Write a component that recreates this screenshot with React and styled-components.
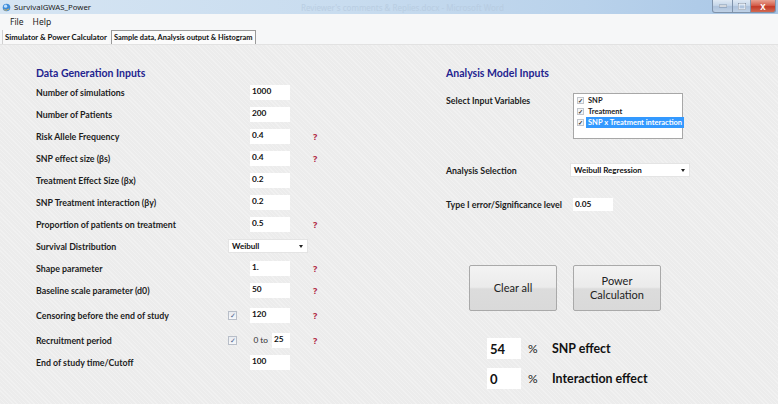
import React from "react";
import styled, { createGlobalStyle, css } from "styled-components";

const Global = createGlobalStyle`
  html, body { margin: 0; padding: 0; }
  body { width: 778px; height: 404px; overflow: hidden; background: #ececec; }
  * { box-sizing: border-box; }
`;

const FONT = `"Lato", "Open Sans", sans-serif`;
const UI = `"Noto Sans", "Open Sans", sans-serif`;

const Window = styled.div`
  width: 778px;
  height: 404px;
  display: flex;
  flex-direction: column;
  font-family: ${FONT};
  color: #1d1d1d;
`;

const TitleBar = styled.div`
  height: 14px;
  flex: none;
  display: flex;
  align-items: center;
  background: linear-gradient(to right, #d6e5f3 0%, #c8dcef 45%, #b9d2eb 75%, #a8c6e6 100%);
`;

const AppIcon = styled.svg`
  width: 9px;
  height: 9px;
  margin: 0 3px 0 2px;
`;

const TitleText = styled.span`
  font-family: ${UI};
  font-size: 7.8px;
  color: #1a1a1a;
`;

const FaintTitle = styled.span`
  font-family: ${UI};
  font-size: 8px;
  color: #b7cbe0;
  margin-left: 210px;
  opacity: 0.8;
`;

const Controls = styled.div`
  margin-left: auto;
  margin-right: 2px;
  display: flex;
  align-self: flex-start;
  height: 13px;
`;

const Ctrl = styled.div`
  width: ${(p) => p.w}px;
  height: 13px;
  display: flex;
  align-items: center;
  justify-content: center;
  border: 1px solid #7f93ab;
  border-top: none;
  border-left: ${(p) => (p.first ? "1px solid #7f93ab" : "none")};
  border-radius: ${(p) => (p.first ? "0 0 0 3px" : p.last ? "0 0 3px 0" : "0")};
  background: ${(p) =>
    p.close
      ? "linear-gradient(#e7a393 0%, #d45f4c 45%, #c23a27 55%, #d26a53 100%)"
      : "linear-gradient(#dfe9f4 0%, #c5d6e9 45%, #aec3dc 55%, #bfd1e6 100%)"};
  color: #fff;
  font-family: ${UI};
  font-size: 8px;
  font-weight: 700;
`;

const MenuBar = styled.div`
  height: 15px;
  flex: none;
  display: flex;
  align-items: center;
  gap: 9px;
  padding-left: 10px;
  background: #f6f7f8;
`;

const MenuItem = styled.span`
  font-family: ${UI};
  font-size: 8.5px;
  color: #222;
`;

const TabStrip = styled.div`
  height: 15px;
  flex: none;
  display: flex;
  align-items: flex-end;
  padding-left: 2px;
  gap: 2px;
  background: #f6f7f8;
`;

const Tab = styled.div`
  height: 14px;
  display: flex;
  align-items: center;
  padding: 0 2px;
  font-family: ${FONT};
  font-weight: 700;
  font-size: ${(p) => p.size}px;
  color: #111;
  white-space: nowrap;
  ${(p) =>
    p.active
      ? css`
          background: #f9f9f9;
          border-left: 1px solid #d0d0d0;
        `
      : css`
          background: #fbfbfb;
          border: 1px solid #9a9a9a;
          border-bottom: none;
        `}
`;

const Content = styled.div`
  flex: 1;
  display: grid;
  grid-template-columns: 446px 1fr;
  background-color: #ececec;
  background-image: repeating-linear-gradient(45deg, rgba(255,255,255,0.25) 0 1px, transparent 1px 3px);
  border-top: 1px solid #e2e2e2;
`;

const LeftPanel = styled.div`
  padding: 20px 0 0 36px;
`;

const RightPanel = styled.div`
  padding: 20px 0 0 0;
  display: flex;
  flex-direction: column;
`;

const Heading = styled.div`
  height: 16px;
  display: flex;
  align-items: center;
  font-weight: 700;
  font-size: 10.5px;
  color: #23238f;
`;

const Row = styled.div`
  display: grid;
  grid-template-columns: 192px 22px 40px 23px 10px;
  align-items: center;
  height: 22px;
  margin-top: ${(p) => p.mt || 0}px;
`;

const Label = styled.span`
  font-weight: 700;
  font-size: 8.8px;
  color: #1d1d1d;
  white-space: nowrap;
`;

const Field = styled.div`
  grid-column: ${(p) => p.col || "3"};
  height: ${(p) => p.h || 15}px;
  width: ${(p) => p.w || 40}px;
  background: #fff;
  font-weight: 700;
  font-size: 8.3px;
  padding: 2px 0 0 2px;
  color: #111;
  line-height: 1;
`;

const Help = styled.span`
  grid-column: 5;
  color: #b02642;
  font-weight: 700;
  font-size: 9px;
  font-family: ${UI};
`;

const Select = styled.div`
  grid-column: ${(p) => p.col || "2 / span 3"};
  width: ${(p) => p.w}px;
  height: 14px;
  background: #fff;
  display: flex;
  align-items: center;
  justify-content: space-between;
  padding: 0 4px 0 3px;
  font-weight: 700;
  font-size: 8px;
  color: #111;
  border: 1px solid #e4e4e4;
`;

const Caret = styled.span`
  width: 0;
  height: 0;
  border-left: 2.5px solid transparent;
  border-right: 2.5px solid transparent;
  border-top: 3px solid #222;
`;

const Check = styled.span`
  grid-column: 2;
  width: 9px;
  height: 9px;
  border: 1px solid #b8bec8;
  background: linear-gradient(#e8ebf0, #f7f8fa);
  display: flex;
  align-items: center;
  justify-content: center;
  font-size: 7px;
  line-height: 1;
  color: #49618a;
`;

const Range = styled.div`
  grid-column: 3;
  display: flex;
  align-items: center;
  gap: 4px;
  justify-content: flex-end;
`;

const RangeText = styled.span`
  font-size: 8.3px;
  color: #333;
`;

const RRow = styled.div`
  display: flex;
  align-items: ${(p) => p.align || "center"};
  margin-top: ${(p) => p.mt || 0}px;
`;

const RLabel = styled(Label)`
  width: ${(p) => p.w || 127}px;
  flex: none;
  padding-top: ${(p) => p.pt || 0}px;
`;

const ListBox = styled.div`
  width: 110px;
  height: 46px;
  background: #fff;
  border: 1px solid #a7a7a7;
  padding: 1px 0 0 3px;
  display: flex;
  flex-direction: column;
`;

const ListItem = styled.div`
  height: 11px;
  display: flex;
  align-items: center;
  gap: 2px;
  font-weight: 700;
  font-size: 7.5px;
  white-space: nowrap;
`;

const MiniCheck = styled.span`
  width: 7px;
  height: 7px;
  flex: none;
  border: 1px solid #c2c6cc;
  background: #f4f5f7;
  font-size: 6px;
  line-height: 6px;
  text-align: center;
  color: #333;
`;

const ItemText = styled.span`
  padding: 1px 2px;
  flex: 1;
  ${(p) =>
    p.sel &&
    css`
      background: #3399ff;
      color: #fff;
    `}
`;

const ButtonRow = styled.div`
  display: flex;
  gap: 16px;
  margin: 54px 0 0 23px;
`;

const Button = styled.div`
  width: 88px;
  height: 46px;
  border: 1px solid #a9a9a9;
  border-radius: 2px;
  background: linear-gradient(#f3f3f3 0%, #ebebeb 48%, #dcdcdc 52%, #d9d9d9 100%);
  display: flex;
  align-items: center;
  justify-content: center;
  text-align: center;
  font-family: ${FONT};
  font-size: 11px;
  line-height: 14px;
  color: #222;
`;

const ResultRow = styled.div`
  display: flex;
  align-items: center;
  margin: ${(p) => p.mt}px 0 0 41px;
`;

const ResultBox = styled.div`
  width: 34px;
  height: 21px;
  background: #fff;
  display: flex;
  align-items: center;
  padding-left: 3px;
  font-weight: 700;
  font-size: 13px;
  color: #111;
`;

const Pct = styled.span`
  width: 24px;
  margin-left: 7px;
  font-size: 12px;
  color: #222;
`;

const ResultLabel = styled.span`
  font-weight: 700;
  font-size: 12.4px;
  color: #111;
`;

const leftRows = [
  { label: "Number of simulations", value: "1000" },
  { label: "Number of Patients", value: "200" },
  { label: "Risk Allele Frequency", value: "0.4", help: true },
  { label: "SNP effect size (βs)", value: "0.4", help: true },
  { label: "Treatment Effect Size (βx)", value: "0.2" },
  { label: "SNP Treatment interaction (βy)", value: "0.2" },
  { label: "Proportion of patients on treatment", value: "0.5", help: true },
  { label: "Survival Distribution", select: "Weibull" },
  { label: "Shape parameter", value: "1.", help: true },
  { label: "Baseline scale parameter (d0)", value: "50", help: true },
  { label: "Censoring before the end of study", value: "120", help: true, check: true, mt: 3 },
  { label: "Recruitment period", range: "25", help: true, check: true, mt: 3 },
  { label: "End of study time/Cutoff", value: "100" },
];

export default function App() {
  return (
    <>
      <Global />
      <Window>
        <TitleBar>
          <AppIcon viewBox="0 0 10 10">
            <circle cx="5" cy="5" r="4.2" fill="#3d8bd8" />
            <circle cx="4" cy="3.6" r="1.8" fill="#bfe0ff" />
            <path d="M2 7.5 Q5 9 8 6.5" stroke="#f2b441" strokeWidth="1" fill="none" />
          </AppIcon>
          <TitleText>SurvivalGWAS_Power</TitleText>
          <FaintTitle>Reviewer's comments &amp; Replies.docx - Microsoft Word</FaintTitle>
          <Controls>
            <Ctrl w={21} first>
              <svg width="8" height="4" viewBox="0 0 8 4"><rect x="0" y="1" width="8" height="2" fill="#fff" stroke="#4a5f7a" strokeWidth="0.5" /></svg>
            </Ctrl>
            <Ctrl w={18}>
              <svg width="8" height="7" viewBox="0 0 8 7"><rect x="0.7" y="0.7" width="6.6" height="5.6" fill="none" stroke="#fff" strokeWidth="1.4" /><rect x="0.2" y="0.2" width="7.6" height="6.6" fill="none" stroke="#4a5f7a" strokeWidth="0.4" /></svg>
            </Ctrl>
            <Ctrl w={25} close last>X</Ctrl>
          </Controls>
        </TitleBar>
        <MenuBar>
          <MenuItem>File</MenuItem>
          <MenuItem>Help</MenuItem>
        </MenuBar>
        <TabStrip>
          <Tab active size={7.8}>Simulator &amp; Power Calculator</Tab>
          <Tab size={7.45}>Sample data, Analysis output &amp; Histogram</Tab>
        </TabStrip>
        <Content>
          <LeftPanel>
            <Heading>Data Generation Inputs</Heading>
            <div>
              {leftRows.map((r) => (
                <Row key={r.label} mt={r.mt}>
                  <Label>{r.label}</Label>
                  {r.check && <Check>✓</Check>}
                  {r.select && (
                    <Select w={80}>
                      {r.select}
                      <Caret />
                    </Select>
                  )}
                  {r.value && <Field>{r.value}</Field>}
                  {r.range && (
                    <Range>
                      <RangeText>0 to</RangeText>
                      <Field w={18} col="auto">{r.range}</Field>
                    </Range>
                  )}
                  {r.help && <Help>?</Help>}
                </Row>
              ))}
            </div>
          </LeftPanel>
          <RightPanel>
            <Heading>Analysis Model Inputs</Heading>
            <RRow align="flex-start" mt={12}>
              <RLabel pt={2}>Select Input Variables</RLabel>
              <ListBox>
                <ListItem><MiniCheck>✓</MiniCheck><ItemText>SNP</ItemText></ListItem>
                <ListItem><MiniCheck>✓</MiniCheck><ItemText>Treatment</ItemText></ListItem>
                <ListItem><MiniCheck>✓</MiniCheck><ItemText sel>SNP x Treatment interaction</ItemText></ListItem>
              </ListBox>
            </RRow>
            <RRow mt={24}>
              <RLabel w={124}>Analysis Selection</RLabel>
              <Select w={120} col="auto">
                Weibull Regression
                <Caret />
              </Select>
            </RRow>
            <RRow mt={21}>
              <RLabel w={127}>Type I error/Significance level</RLabel>
              <Field col="auto" w={40} h={13}>0.05</Field>
            </RRow>
            <ButtonRow>
              <Button>Clear all</Button>
              <Button>Power<br />Calculation</Button>
            </ButtonRow>
            <ResultRow mt={27}>
              <ResultBox>54</ResultBox>
              <Pct>%</Pct>
              <ResultLabel>SNP effect</ResultLabel>
            </ResultRow>
            <ResultRow mt={9}>
              <ResultBox>0</ResultBox>
              <Pct>%</Pct>
              <ResultLabel>Interaction effect</ResultLabel>
            </ResultRow>
          </RightPanel>
        </Content>
      </Window>
    </>
  );
}
